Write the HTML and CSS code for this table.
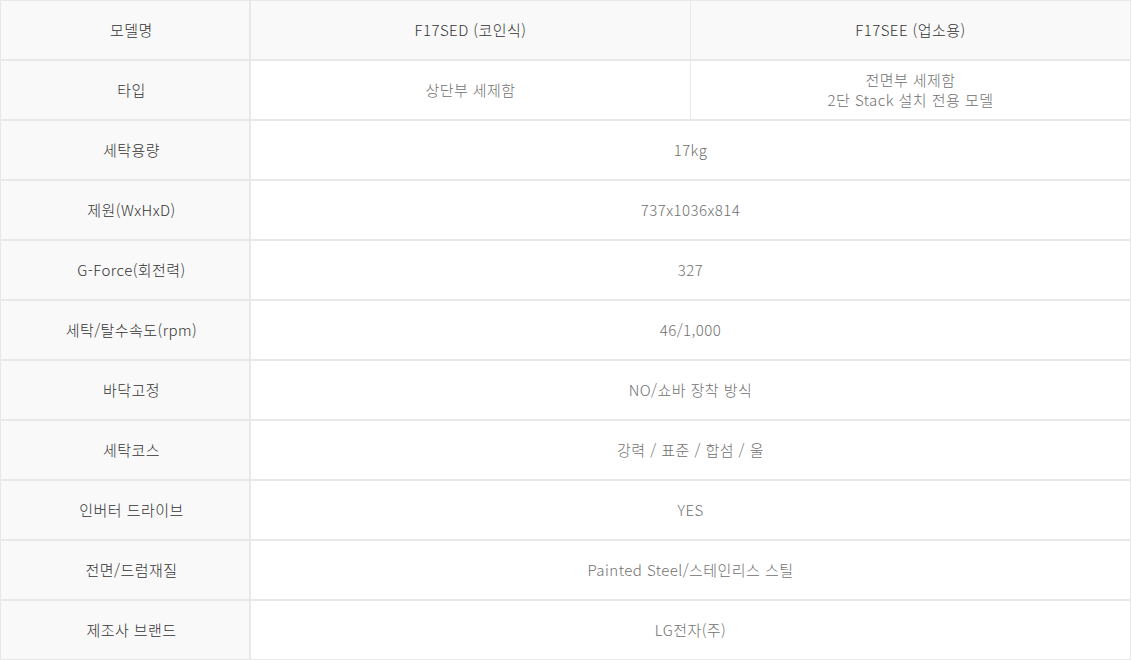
FILE: index.html
```html
<!DOCTYPE html>
<html lang="ko">
<head>
<meta charset="utf-8">
<title>Spec</title>
<link rel="stylesheet" href="styles.css">
</head>
<body>
<table class="spec">
  <colgroup><col class="c-label"><col class="c-a"><col class="c-b"></colgroup>
  <tr class="head">
    <th>모델명</th>
    <td class="first">F17SED (코인식)</td>
    <td>F17SEE (업소용)</td>
  </tr>
  <tr>
    <th>타입</th>
    <td class="first">상단부 세제함</td>
    <td>전면부 세제함<br>2단 Stack 설치 전용 모델</td>
  </tr>
  <tr><th>세탁용량</th><td class="first span" colspan="2">17kg</td></tr>
  <tr><th>제원(WxHxD)</th><td class="first span" colspan="2">737x1036x814</td></tr>
  <tr><th>G-Force(회전력)</th><td class="first span" colspan="2">327</td></tr>
  <tr><th>세탁/탈수속도(rpm)</th><td class="first span" colspan="2">46/1,000</td></tr>
  <tr><th>바닥고정</th><td class="first span" colspan="2">NO/쇼바 장착 방식</td></tr>
  <tr><th>세탁코스</th><td class="first span" colspan="2">강력 / 표준 / 합섬 / 울</td></tr>
  <tr><th>인버터 드라이브</th><td class="first span" colspan="2">YES</td></tr>
  <tr><th>전면/드럼재질</th><td class="first span" colspan="2">Painted Steel/스테인리스 스틸</td></tr>
  <tr><th>제조사 브랜드</th><td class="first span" colspan="2">LG전자(주)</td></tr>
</table>
</body>
</html>
```

FILE: styles.css
```css
html, body {
  margin: 0;
  padding: 0;
  background: #ffffff;
}
body {
  font-family: "Noto Sans CJK KR", sans-serif;
  font-size: 15px;
  font-weight: 300;
  color: #707070;
}
.spec {
  width: 1131px;
  border-collapse: separate;
  border-spacing: 0;
  table-layout: fixed;
}
.c-label { width: 250px; }
.c-a { width: 441px; }
.c-b { width: 440px; }
.spec th,
.spec td {
  height: 58px;
  padding: 0;
  text-align: center;
  vertical-align: middle;
  line-height: 20px;
  border-top: 1px solid #e8e8e8;
  border-bottom: 1px solid #e8e8e8;
  border-right: 1px solid #e8e8e8;
  font-weight: 300;
  letter-spacing: 0.45px;
}
.spec th {
  background: #f9f9f9;
  color: #333333;
  border-left: 1px solid #e8e8e8;
  padding-left: 13px;
}
.spec td.first {
  border-left: 1px solid #e8e8e8;
}
.spec tr.head td {
  background: #f9f9f9;
  color: #333333;
}
```
